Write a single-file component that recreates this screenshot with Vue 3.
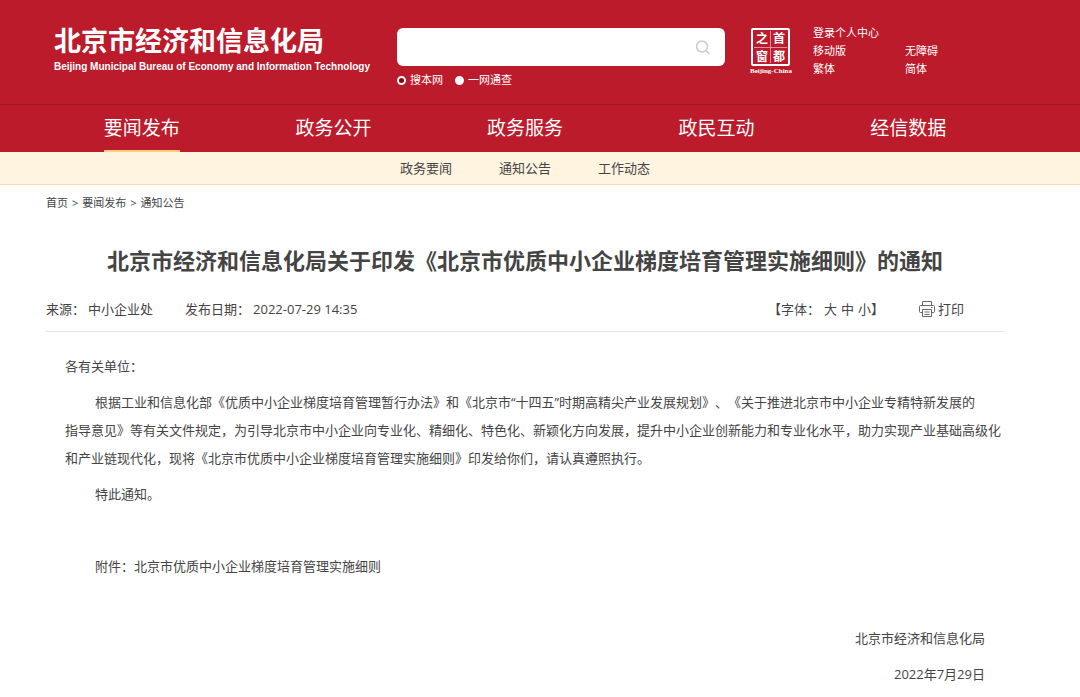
<script setup>
import { ref } from 'vue'

const scope = ref('site')
const keyword = ref('')
const nav = ['要闻发布', '政务公开', '政务服务', '政民互动', '经信数据']
const subnav = ['政务要闻', '通知公告', '工作动态']
</script>

<template>
  <div class="page">
    <header class="header">
      <div class="wrap top">
        <a class="brand" href="#">
          <span class="brand-cn">北京市经济和信息化局</span>
          <span class="brand-en">Beijing Municipal Bureau of Economy and Information Technology</span>
        </a>
        <form class="search" @submit.prevent>
          <div class="search-box">
            <input v-model="keyword" class="search-input" type="text" aria-label="搜索" />
            <button class="search-btn" type="submit" aria-label="搜索">
              <svg viewBox="0 0 16 16" width="16" height="16" fill="none" stroke="#ccc" stroke-width="1.6">
                <circle cx="7" cy="7.500" r="5.4" />
                <path d="M11 11.500l3 3" stroke-linecap="round" />
              </svg>
            </button>
          </div>
          <div class="scopes">
            <label class="scope"><input v-model="scope" type="radio" name="scope" value="site" />搜本网</label>
            <label class="scope"><input v-model="scope" type="radio" name="scope" value="all" />一网通查</label>
          </div>
        </form>
        <a class="seal" href="#" aria-label="首都之窗">
          <svg viewBox="0 0 44 46" width="44" height="46">
            <rect x="3" y="1" width="37" height="36" rx="1" fill="none" stroke="#fff" stroke-width="2" />
            <path d="M21.500 3v32M5 19.500h33" stroke="#e08d97" stroke-width="1" />
            <g class="seal-chars" fill="#fff" text-anchor="middle">
              <text x="13" y="15">之</text>
              <text x="30" y="15">首</text>
              <text x="13" y="33">窗</text>
              <text x="30" y="33">都</text>
            </g>
            <text class="seal-en" x="22" y="45" fill="#fff" text-anchor="middle">Beijing-China</text>
          </svg>
        </a>
        <nav class="links">
          <a class="wide" href="#">登录个人中心</a>
          <a href="#">移动版</a>
          <a href="#">无障碍</a>
          <a href="#">繁体</a>
          <a href="#">简体</a>
        </nav>
      </div>
      <nav class="nav">
        <div class="wrap nav-row">
          <div v-for="(item, i) in nav" :key="item" class="nav-cell">
            <a href="#" :class="{ active: i === 0 }">{{ item }}</a>
          </div>
        </div>
      </nav>
    </header>
    <nav class="subnav">
      <a v-for="item in subnav" :key="item" href="#">{{ item }}</a>
    </nav>

    <main class="wrap">
      <div class="crumbs">
        <a href="#">首页</a><span>&gt;</span><a href="#">要闻发布</a><span>&gt;</span><a href="#">通知公告</a>
      </div>
      <h1>北京市经济和信息化局关于印发《北京市优质中小企业梯度培育管理实施细则》的通知</h1>
      <div class="meta">
        <span class="source">来源：<span class="val">中小企业处</span></span>
        <span>发布日期：<span class="val">2022-07-29 14:35</span></span>
        <div class="tools">
          <span class="sizes">【字体：<button class="first">大</button><button>中</button><button>小</button>】</span>
          <button class="print">
            <svg viewBox="0 0 18 18" width="18" height="18" fill="none" stroke="#666" stroke-width="1">
              <path d="M4.500 5.500v-4h9v4" />
              <path d="M4.500 12.500h-2q-1 0-1-1v-5q0-1 1-1h13q1 0 1 1v5q0 1-1 1h-2" />
              <path d="M4.500 9.500h9v7h-9zM6.500 12h5M6.500 14.500h5M13 7.500h1.500" />
            </svg>打印
          </button>
        </div>
      </div>
      <article class="body">
        <p>各有关单位：</p>
        <p class="indent">根据工业和信息化部《优质中小企业梯度培育管理暂行办法》和《北京市“十四五”时期高精尖产业发展规划》、《关于推进北京市中小企业专精特新发展的<br />指导意见》等有关文件规定，为引导北京市中小企业向专业化、精细化、特色化、新颖化方向发展，提升中小企业创新能力和专业化水平，助力实现产业基础高级化<br />和产业链现代化，现将《北京市优质中小企业梯度培育管理实施细则》印发给你们，请认真遵照执行。</p>
        <p class="indent">特此通知。</p>
        <p class="indent attach">附件：<a href="#">北京市优质中小企业梯度培育管理实施细则</a></p>
        <p class="sign">北京市经济和信息化局</p>
        <p class="sign">2022年7月29日</p>
      </article>
    </main>
  </div>
</template>

<style>
body {
  margin: 0;
  background: #fff;
}
</style>

<style scoped>
.page {
  font-family: "Open Sans", "Noto Sans CJK SC", sans-serif;
  font-size: 13px;
  color: #444;
  text-spacing-trim: space-all;
}
a {
  color: inherit;
  text-decoration: none;
}
button {
  padding: 0;
  border: 0;
  background: none;
  font: inherit;
  color: inherit;
  cursor: pointer;
}
.page {
  --shift: 30px;
}
.wrap {
  box-sizing: content-box;
  max-width: 958px;
  margin: 0 auto;
  padding-right: var(--shift);
}
.header {
  background: #bc1b2c;
  color: #fff;
}
.top {
  display: flex;
  align-items: flex-start;
  min-height: 76px;
  padding-top: 28px;
}
.brand {
  display: flex;
  flex-direction: column;
  width: 343px;
  margin-left: 8px;
  white-space: nowrap;
}
.brand-cn {
  font-size: 27px;
  line-height: 26px;
  font-weight: 700;
}
.brand-en {
  margin-top: 6px;
  font: 700 10px/14px "Liberation Sans", sans-serif;
}
.search {
  width: 328px;
}
.search-box {
  display: flex;
  align-items: center;
  height: 38px;
  padding-right: 14px;
  border-radius: 6px;
  background: #fff;
}
.search-input {
  flex: 1;
  min-width: 0;
  height: 36px;
  padding: 0 12px;
  border: 0;
  outline: 0;
  background: transparent;
  font: inherit;
}
.search-btn {
  display: flex;
}
.scopes {
  display: flex;
  gap: 12px;
  margin-top: 6px;
  font-size: 11px;
  line-height: 16px;
}
.scope {
  display: flex;
  align-items: center;
  gap: 4px;
}
.scope input {
  appearance: none;
  box-sizing: border-box;
  width: 9px;
  height: 9px;
  margin: 0;
  border: 2px solid #fff;
  border-radius: 50%;
  background: #fff;
}
.scope input:checked {
  background: #8c0000;
}
.seal {
  display: flex;
  margin-left: 24px;
}
.seal-chars {
  font: 700 12px/12px "Noto Sans CJK SC", sans-serif;
}
.seal-en {
  font: 700 7px "Liberation Serif", serif;
}
.links {
  display: grid;
  grid-template-columns: 92px auto;
  margin-left: 20px;
  margin-top: -4px;
  font-size: 11px;
  line-height: 18px;
}
.links .wide {
  grid-column: 1 / -1;
}
.nav {
  border-top: 1px solid #9f1524;
}
.nav-row {
  display: grid;
  grid-template-columns: repeat(5, 1fr);
}
.nav-cell {
  text-align: center;
}
.nav-cell a {
  display: inline-block;
  height: 45px;
  border-bottom: 2px solid transparent;
  font-size: 19px;
  line-height: 46px;
  vertical-align: top;
}
.nav-cell .active {
  border-bottom-color: #ffcf7a;
}
.subnav {
  display: flex;
  justify-content: center;
  gap: 47px;
  padding-right: var(--shift);
  border-bottom: 1px solid #f7dfb4;
  background: #fff4df;
  line-height: 32px;
}
.crumbs {
  display: flex;
  gap: 4px;
  padding-top: 9px;
  font-size: 11px;
  line-height: 18px;
}
h1 {
  margin: 32px 0 0;
  font-size: 22px;
  line-height: 32px;
  font-weight: 700;
  text-align: center;
  white-space: nowrap;
}
.meta {
  display: flex;
  align-items: center;
  gap: 32px;
  margin-top: 23px;
  padding-bottom: 12px;
  border-bottom: 1px solid #e2e2e2;
  line-height: 20px;
}
.val {
  margin-left: 3px;
}
.tools {
  display: flex;
  gap: 34px;
  margin-left: auto;
  padding-right: 40px;
}
.sizes button {
  margin-right: 4px;
}
.sizes .first {
  margin-left: 4px;
}
.sizes button:last-child {
  margin-right: 0;
}
.print {
  display: flex;
  align-items: center;
  gap: 2px;
}
.body {
  padding: 20px 0 0 19px;
  line-height: 28px;
}
.body p {
  margin: 0 0 8px;
  white-space: nowrap;
}
.body .indent {
  text-indent: 30px;
}
.body .attach {
  margin: 44px 0;
}
.body .sign {
  padding-right: 19px;
  text-align: right;
}
</style>
